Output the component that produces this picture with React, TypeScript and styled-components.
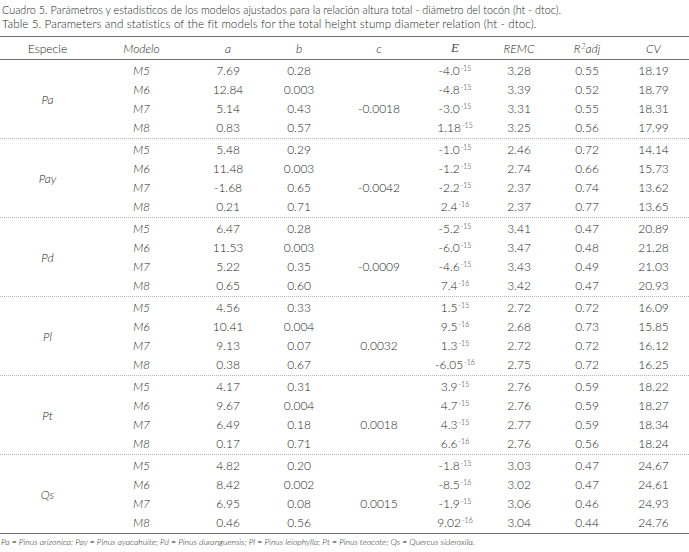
import React from 'react';
import styled, { createGlobalStyle } from 'styled-components';

const GlobalStyle = createGlobalStyle`
    html, body {
        margin: 0;
        padding: 0;
        background: #ffffff;
    }
    body {
        font-family: Lato, "Open Sans", "DejaVu Sans", sans-serif;
        font-weight: 300;
        color: #231f20;
    }
`;

type Row = [string, string, string, string, [string, string], string, string, string];

interface IGroup {
    species: string;
    rows: Row[];
}

const groups: IGroup[] = [
    {
        species: 'Pa',
        rows: [
            ['M5', '7.69', '0.28', '', ['-4.0', '-15'], '3.28', '0.55', '18.19'],
            ['M6', '12.84', '0.003', '', ['-4.8', '-15'], '3.39', '0.52', '18.79'],
            ['M7', '5.14', '0.43', '-0.0018', ['-3.0', '-15'], '3.31', '0.55', '18.31'],
            ['M8', '0.83', '0.57', '', ['1.18', '-15'], '3.25', '0.56', '17.99'],
        ],
    },
    {
        species: 'Pay',
        rows: [
            ['M5', '5.48', '0.29', '', ['-1.0', '-15'], '2.46', '0.72', '14.14'],
            ['M6', '11.48', '0.003', '', ['-1.2', '-15'], '2.74', '0.66', '15.73'],
            ['M7', '-1.68', '0.65', '-0.0042', ['-2.2', '-15'], '2.37', '0.74', '13.62'],
            ['M8', '0.21', '0.71', '', ['2.4', '-16'], '2.37', '0.77', '13.65'],
        ],
    },
    {
        species: 'Pd',
        rows: [
            ['M5', '6.47', '0.28', '', ['-5.2', '-15'], '3.41', '0.47', '20.89'],
            ['M6', '11.53', '0.003', '', ['-6.0', '-15'], '3.47', '0.48', '21.28'],
            ['M7', '5.22', '0.35', '-0.0009', ['-4.6', '-15'], '3.43', '0.49', '21.03'],
            ['M8', '0.65', '0.60', '', ['7.4', '-16'], '3.42', '0.47', '20.93'],
        ],
    },
    {
        species: 'Pl',
        rows: [
            ['M5', '4.56', '0.33', '', ['1.5', '-15'], '2.72', '0.72', '16.09'],
            ['M6', '10.41', '0.004', '', ['9.5', '-16'], '2.68', '0.73', '15.85'],
            ['M7', '9.13', '0.07', '0.0032', ['1.3', '-15'], '2.72', '0.72', '16.12'],
            ['M8', '0.38', '0.67', '', ['-6.05', '-16'], '2.75', '0.72', '16.25'],
        ],
    },
    {
        species: 'Pt',
        rows: [
            ['M5', '4.17', '0.31', '', ['3.9', '-15'], '2.76', '0.59', '18.22'],
            ['M6', '9.67', '0.004', '', ['4.7', '-15'], '2.76', '0.59', '18.27'],
            ['M7', '6.49', '0.18', '0.0018', ['4.3', '-15'], '2.77', '0.59', '18.34'],
            ['M8', '0.17', '0.71', '', ['6.6', '-16'], '2.76', '0.56', '18.24'],
        ],
    },
    {
        species: 'Qs',
        rows: [
            ['M5', '4.82', '0.20', '', ['-1.8', '-15'], '3.03', '0.47', '24.67'],
            ['M6', '8.42', '0.002', '', ['-8.5', '-16'], '3.02', '0.47', '24.61'],
            ['M7', '6.95', '0.08', '0.0015', ['-1.9', '-15'], '3.06', '0.46', '24.93'],
            ['M8', '0.46', '0.56', '', ['9.02', '-16'], '3.04', '0.44', '24.76'],
        ],
    },
];

const COLUMNS = '95px 93px 80px 62px 98px 54px 74px 62px 71px';

export default function App() {
    return (
        <Page>
            <GlobalStyle />
            <Caption>
                <CaptionLine>
                    Cuadro 5. Parámetros y estadísticos de los modelos ajustados para la relación altura total - diámetro del tocón (ht - dtoc).
                </CaptionLine>
                <CaptionLine $english>
                    Table 5. Parameters and statistics of the fit models for the total height stump diameter relation (ht - dtoc).
                </CaptionLine>
            </Caption>

            <Table>
                <HeadRow>
                    <HeadCell>Especie</HeadCell>
                    <HeadCell $italic>Modelo</HeadCell>
                    <HeadCell $italic>a</HeadCell>
                    <HeadCell $italic>b</HeadCell>
                    <HeadCell $italic>c</HeadCell>
                    <HeadCell $italic $serif>E</HeadCell>
                    <HeadCell $italic>REMC</HeadCell>
                    <HeadCell $italic>
                        R<Sup>2</Sup>adj
                    </HeadCell>
                    <HeadCell $italic>CV</HeadCell>
                </HeadRow>

                {groups.map((g) => (
                    <Group key={g.species}>
                        <Species>{g.species}</Species>
                        {g.rows.map((r) => (
                            <React.Fragment key={g.species + r[0]}>
                                <Cell $italic>{r[0]}</Cell>
                                <Cell>{r[1]}</Cell>
                                <Cell>{r[2]}</Cell>
                                <Cell>{r[3]}</Cell>
                                <Cell>
                                    {r[4][0]}
                                    <Sup>{r[4][1]}</Sup>
                                </Cell>
                                <Cell>{r[5]}</Cell>
                                <Cell>{r[6]}</Cell>
                                <Cell>{r[7]}</Cell>
                            </React.Fragment>
                        ))}
                    </Group>
                ))}
            </Table>

            <Footnote>
                Pa = Pinus arizonica; Pay = Pinus ayacahuite; Pd = Pinus duranguensis; Pl = Pinus leiophylla; Pt = Pinus teocote; Qs = Quercus sideroxila.
            </Footnote>
        </Page>
    );
}

const Page = styled.div`
    width: 689px;
    padding-top: 3px;
`;

const Caption = styled.div`
    padding-left: 2px;
    margin-bottom: 5px;
`;

const CaptionLine = styled.div<{ $english?: boolean }>`
    font-size: ${(p) => (p.$english ? '11.6px' : '10.8px')};
    line-height: 14px;
    white-space: nowrap;
    letter-spacing: ${(p) => (p.$english ? '0.1px' : '0')};
`;

const Table = styled.div`
    border-top: 1.5px solid #6d6d6d;
    border-bottom: 1.5px solid #6d6d6d;
`;

const HeadRow = styled.div`
    display: grid;
    grid-template-columns: ${COLUMNS};
    height: 22px;
    align-items: center;
    border-bottom: 1.5px solid #6d6d6d;
`;

const HeadCell = styled.div<{ $italic?: boolean; $serif?: boolean }>`
    text-align: center;
    font-size: ${(p) => (p.$serif ? '13px' : '12px')};
    font-style: ${(p) => (p.$italic ? 'italic' : 'normal')};
    font-family: ${(p) => (p.$serif ? '"Liberation Serif", serif' : 'inherit')};
    color: ${(p) => (p.$serif ? '#4a4a4a' : 'inherit')};
`;

const Group = styled.div`
    display: grid;
    grid-template-columns: ${COLUMNS};
    grid-auto-rows: 19px;
    padding: 1px 0;
    align-items: center;
    border-bottom: 1px dotted #b5b5b5;

    &:last-child {
        border-bottom: none;
    }
`;

const Species = styled.div`
    grid-column: 1;
    grid-row: 1 / span 4;
    align-self: center;
    text-align: center;
    font-size: 12px;
    font-style: italic;
`;

const Cell = styled.div<{ $italic?: boolean }>`
    text-align: center;
    font-size: 12px;
    line-height: 19px;
    font-style: ${(p) => (p.$italic ? 'italic' : 'normal')};
    white-space: nowrap;
`;

const Sup = styled.span`
    position: relative;
    top: -4px;
    font-size: 7px;
    line-height: 0;
    margin-left: 1px;
`;

const Footnote = styled.div`
    margin-top: 3px;
    padding-left: 1px;
    font-size: 8.6px;
    font-style: italic;
    white-space: nowrap;
`;
